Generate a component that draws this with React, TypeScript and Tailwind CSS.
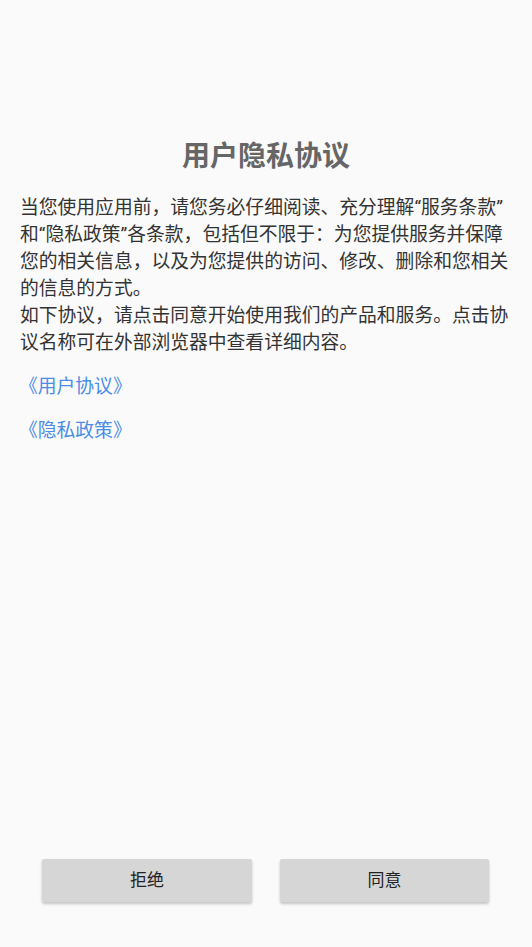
import React from 'react'

const font = { fontFamily: '"Roboto", "Noto Sans CJK SC", sans-serif' }

const lines = [
  '当您使用应用前，请您务必仔细阅读、充分理解“服务条款”',
  '和“隐私政策”各条款，包括但不限于：为您提供服务并保障',
  '您的相关信息，以及为您提供的访问、修改、删除和您相关',
  '的信息的方式。',
  '如下协议，请点击同意开始使用我们的产品和服务。点击协',
  '议名称可在外部浏览器中查看详细内容。',
]

export default function App() {
  return (
    <div className="flex h-screen flex-col bg-[#fafafa]" style={font}>
      {/* Title */}
      <h1 className="pt-[139px] text-center text-[28px] font-bold leading-[36px] text-[#666666]">
        用户隐私协议
      </h1>

      {/* Body */}
      <div className="mt-[20px] pl-[20px] text-[18.8px] leading-[27px] text-[#333333]">
        {lines.map((line, i) => (
          <div key={i} className="whitespace-nowrap">
            {line}
          </div>
        ))}
      </div>

      {/* Links */}
      <div className="mt-[17px] flex flex-col gap-[17px] pl-[19px] text-[18.8px] leading-[27px] text-[#4a8ce6]">
        <a className="w-fit cursor-pointer">《用户协议》</a>
        <a className="w-fit cursor-pointer">《隐私政策》</a>
      </div>

      {/* Buttons */}
      <div className="mt-auto flex gap-[28px] pb-[45px] pl-[42px]">
        <button className="h-[43px] w-[210px] rounded-[2px] bg-[#d6d6d6] text-[17px] text-[#222222] shadow-[0_2px_3px_rgba(0,0,0,0.22)]">
          拒绝
        </button>
        <button className="h-[43px] w-[209px] rounded-[2px] bg-[#d6d6d6] text-[17px] text-[#222222] shadow-[0_2px_3px_rgba(0,0,0,0.22)]">
          同意
        </button>
      </div>
    </div>
  )
}
